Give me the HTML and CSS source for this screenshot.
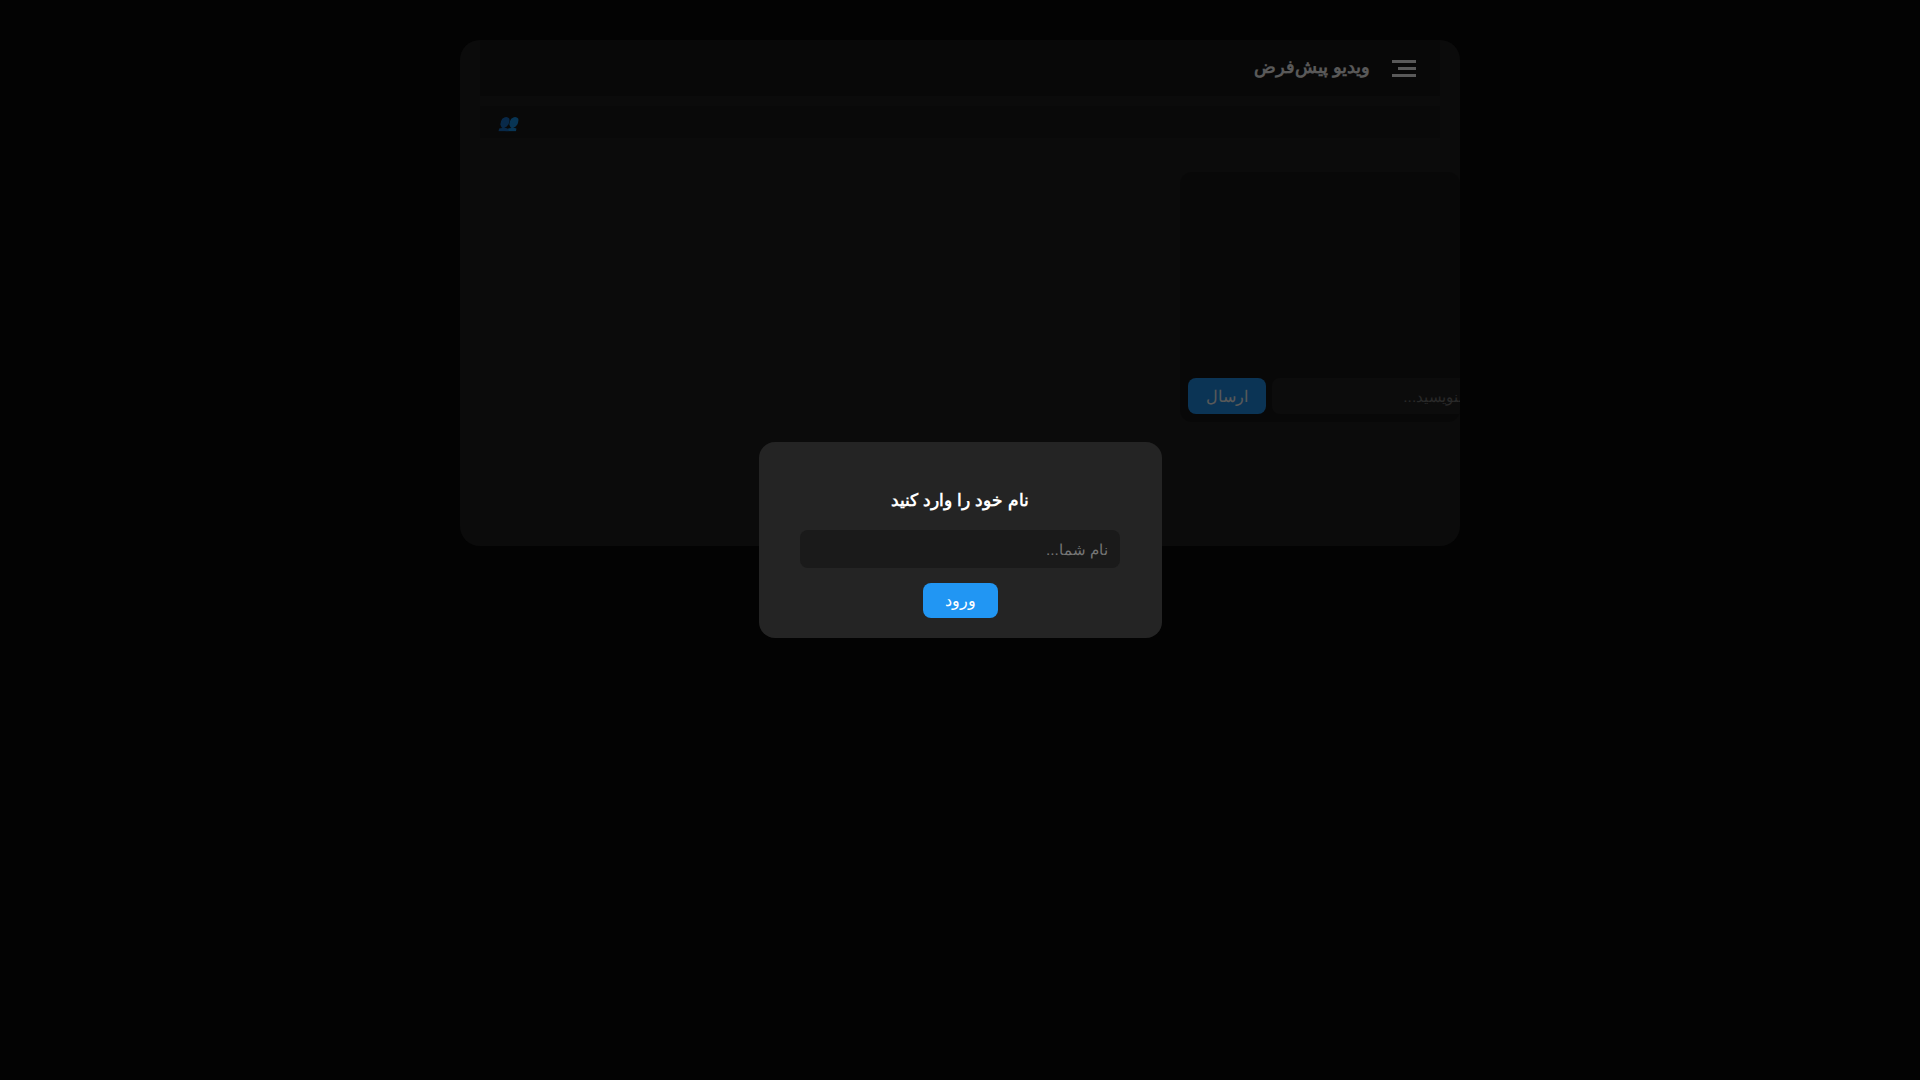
FILE: index.html
```html
<!DOCTYPE html>
<html lang="fa" dir="rtl">
<head>
<meta charset="utf-8">
<title>ویدیو</title>
<link rel="stylesheet" href="styles.css">
</head>
<body>
<main class="app">
  <header class="topbar">
    <button class="menu-btn" aria-label="منو">
      <span class="bar"></span>
      <span class="bar bar-short"></span>
      <span class="bar"></span>
    </button>
    <h1 class="video-title">ویدیو پیش‌فرض</h1>
  </header>
  <div class="viewers">
    <i class="viewers-icon">👥</i>
  </div>
  <section class="content">
    <aside class="chat">
      <div class="chat-messages"></div>
      <form class="chat-form">
        <button type="button" class="send-btn">ارسال</button>
        <input class="chat-input" type="text" dir="rtl" placeholder="پیام خود را بنویسید...">
      </form>
    </aside>
  </section>
</main>
<div class="overlay">
  <div class="modal">
    <h3 class="modal-title">نام خود را وارد کنید</h3>
    <input class="name-input" type="text" placeholder="نام شما...">
    <button type="button" class="enter-btn">ورود</button>
  </div>
</div>
</body>
</html>
```

FILE: styles.css
```css
* { box-sizing: border-box; }
html, body { height: 100%; }
body {
  margin: 0;
  background: #090909;
  color: #fff;
  font-family: "Liberation Sans", sans-serif;
  overflow: hidden;
}
.app {
  width: 1000px;
  height: 506px;
  margin: 40px auto 0;
  padding: 0 20px;
  background: #202020;
  border-radius: 20px;
  overflow: hidden;
  display: flex;
  flex-direction: column;
}
.topbar {
  height: 56px;
  flex: none;
  display: flex;
  align-items: center;
  gap: 22px;
  padding: 0 24px;
  background: #181818;
}
.menu-btn {
  width: 24px;
  height: 17px;
  padding: 0;
  border: 0;
  background: none;
  display: flex;
  flex-direction: column;
  justify-content: space-between;
  align-items: flex-start;
}
.bar { display: block; width: 24px; height: 3px; background: #fff; }
.bar-short { width: 18px; }
.video-title {
  margin: 0;
  font-size: 18px;
  font-weight: 700;
  line-height: 1.2;
  color: #fff;
}
.viewers {
  margin-top: 10px;
  height: 32px;
  flex: none;
  display: flex;
  align-items: center;
  justify-content: flex-end;
  padding: 2px 18px 0;
  background: #1c1c1c;
}
.viewers-icon { color: #2196f3; font-size: 16px; font-style: italic; line-height: 1; }
.content {
  margin: 34px -20px 0 0;
  flex: 1;
  min-height: 0;
  display: flex;
}
.chat {
  width: 280px;
  height: 250px;
  padding: 8px;
  background: #181818;
  border-radius: 12px;
  overflow: hidden;
  display: flex;
  flex-direction: column;
}
.chat-messages { flex: 1; }
.chat-form { direction: ltr; display: flex; gap: 6px; }
.send-btn {
  flex: none;
  width: 78px;
  height: 36px;
  padding: 0;
  border: 0;
  border-radius: 8px;
  background: #2196f3;
  color: #fff;
  font: 16px "Liberation Sans", sans-serif;
}
.chat-input {
  flex: none;
  width: 274px;
  height: 36px;
  padding: 1px 12px 0;
  border: 0;
  border-radius: 8px;
  background: #242424;
  color: #fff;
  font: 15.4px "Liberation Sans", sans-serif;
}
.overlay {
  position: fixed;
  inset: 0;
  background: rgba(0, 0, 0, 0.65);
  display: flex;
  align-items: center;
  justify-content: center;
}
.modal {
  width: 403px;
  height: 196px;
  padding: 47px 41px 20px;
  background: #242424;
  border-radius: 16px;
  display: flex;
  flex-direction: column;
  align-items: center;
}
.modal-title {
  margin: 0 0 19px;
  height: 22px;
  font-size: 17.15px;
  line-height: 22px;
  font-weight: 700;
  color: #fff;
}
.name-input {
  width: 320px;
  height: 38px;
  flex: none;
  padding: 1px 12px 0;
  border: 0;
  border-radius: 8px;
  background: #1a1a1a;
  color: #fff;
  font: 15.4px "Liberation Sans", sans-serif;
}
.enter-btn {
  margin-top: 15px;
  width: 75px;
  height: 35px;
  flex: none;
  padding: 0;
  border: 0;
  border-radius: 8px;
  background: #2196f3;
  color: #fff;
  font: 16px "Liberation Sans", sans-serif;
}
```
